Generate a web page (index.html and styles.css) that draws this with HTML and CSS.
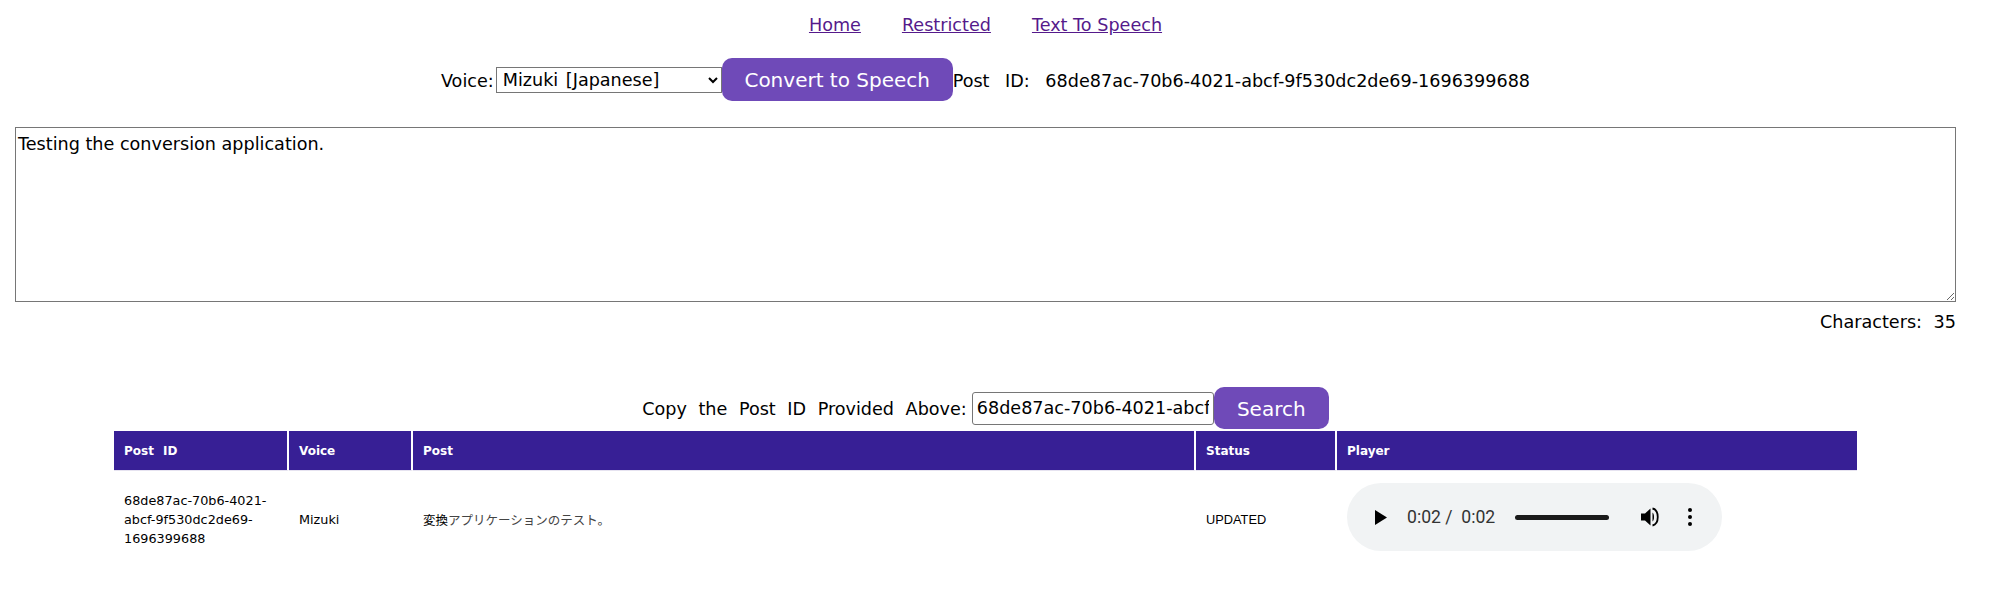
FILE: index.html
```html
<!DOCTYPE html>
<html lang="en">

<head>
    <meta charset="UTF-8">
    <title>Text To Speech</title>
    <link rel="stylesheet" href="styles.css">
</head>

<body>
    <div class="page">
        <nav class="nav">
            <a href="#">Home</a>
            <a href="#">Restricted</a>
            <a href="#">Text To Speech</a>
        </nav>

        <div class="form-row convert-row">
            <label for="voice">Voice:</label>
            <select id="voice" class="voice-select">
                <option>Mizuki [Japanese]</option>
            </select>
            <button class="btn btn-convert">Convert to Speech</button>
            <span class="post-id">Post ID: 68de87ac-70b6-4021-abcf-9f530dc2de69-1696399688</span>
        </div>

        <textarea class="post-text">Testing the conversion application.</textarea>
        <div class="counter">Characters: 35</div>

        <div class="form-row search-row">
            <label for="postId">Copy the Post ID Provided Above:</label>
            <input id="postId" class="search-input" type="text" value="68de87ac-70b6-4021-abcf-9f530dc2de69-1696399688">
            <button class="btn btn-search">Search</button>
        </div>

        <table class="posts">
            <colgroup>
                <col class="col-id">
                <col class="col-voice">
                <col class="col-post">
                <col class="col-status">
                <col class="col-player">
            </colgroup>
            <thead>
                <tr>
                    <th>Post ID</th>
                    <th>Voice</th>
                    <th>Post</th>
                    <th>Status</th>
                    <th>Player</th>
                </tr>
            </thead>
            <tbody>
                <tr>
                    <td>68de87ac-70b6-4021-abcf-9f530dc2de69-1696399688</td>
                    <td>Mizuki</td>
                    <td class="ja"><span class="kanji">変換</span>アプリケーションのテスト。</td>
                    <td class="status">UPDATED</td>
                    <td>
                        <div class="player">
                            <svg class="icon-play" width="12" height="15" viewBox="0 0 12 15">
                                <path d="M0 0 L12 7.5 L0 15 Z" fill="#000" />
                            </svg>
                            <span class="time">0:02 /&nbsp; 0:02</span>
                            <span class="track"></span>
                            <svg class="icon-volume" width="20" height="20" viewBox="0 0 20 20">
                                <path d="M0 6.5 H4 L9.5 1.5 V18.5 L4 13.5 H0 Z" fill="#000" />
                                <path d="M11.5 5.5 C13.5 7 13.5 13 11.5 14.5 Z" fill="#000" />
                                <path d="M11.5 1.5 C18.5 3 18.5 17 11.5 18.5" fill="none" stroke="#000" stroke-width="1.8" />
                            </svg>
                            <svg class="icon-more" width="4" height="18" viewBox="0 0 4 18">
                                <circle cx="2" cy="2" r="2" fill="#000" />
                                <circle cx="2" cy="9" r="2" fill="#000" />
                                <circle cx="2" cy="16" r="2" fill="#000" />
                            </svg>
                        </div>
                    </td>
                </tr>
            </tbody>
        </table>
    </div>
</body>

</html>
```

FILE: styles.css
```css
* {
    box-sizing: border-box;
}

body {
    margin: 0;
    background-color: #fff;
    color: #000;
    font-family: "DejaVu Sans", sans-serif;
    font-size: 17.6px;
}

.page {
    padding: 13px 35px 0 15px;
}

.nav {
    display: flex;
    justify-content: center;
    gap: 41px;
    height: 24px;
    line-height: 24px;
}

.nav a {
    color: #551a8b;
}

.form-row {
    display: flex;
    justify-content: center;
    align-items: center;
    word-spacing: 6px;
}

.form-row label,
.post-id {
    padding-top: 2px;
}

.post-id {
    word-spacing: 10px;
}

.convert-row {
    margin-top: 21px;
    height: 43px;
}

.voice-select {
    width: 226px;
    height: 26px;
    margin-left: 2px;
    padding-left: 2px;
    font-family: "DejaVu Sans", sans-serif;
    font-size: 17.6px;
    word-spacing: 2px;
    background-color: #fff;
}

.btn {
    padding-top: 2px;
    border: 0;
    border-radius: 10px;
    background-color: #6f4ab8;
    color: #fff;
    font-family: "DejaVu Sans", sans-serif;
    font-size: 20px;
}

.btn-convert {
    width: 231px;
    height: 43px;
}

.post-text {
    display: block;
    width: 100%;
    height: 175px;
    margin-top: 26px;
    padding: 6px 2px 2px;
    border: 1px solid #767676;
    font-family: "DejaVu Sans", sans-serif;
    font-size: 17.6px;
}

.counter {
    margin-top: 10px;
    line-height: 20px;
    text-align: right;
    word-spacing: 6px;
}

.search-row {
    margin-top: 55px;
    height: 42px;
}

.search-input {
    width: 242px;
    height: 33px;
    margin-left: 5px;
    padding: 1px 4px;
    border: 1px solid #767676;
    border-radius: 3px;
    font-family: "DejaVu Sans", sans-serif;
    font-size: 17.6px;
}

.btn-search {
    width: 115px;
    height: 42px;
}

.posts {
    width: 1743px;
    margin: 2px auto 0;
    border-spacing: 0;
    table-layout: fixed;
    font-size: 12.8px;
}

.col-id { width: 175px; }
.col-voice { width: 124px; }
.col-post { width: 783px; }
.col-status { width: 141px; }

.posts th {
    height: 40px;
    padding: 0 10px;
    background-color: #371f95;
    border-right: 2px solid #fff;
    border-bottom: 1px solid #e6e3f0;
    color: #fff;
    font-size: 12px;
    text-align: left;
    word-spacing: 5px;
}

.posts th:last-child {
    border-right: 0;
}

.posts td {
    padding: 12px 10px;
    line-height: 19px;
}

.ja {
    font-family: "Noto Sans CJK JP", sans-serif;
    font-size: 12.5px;
    color: #444;
}

.kanji {
    color: #000;
}

.status {
    font-family: "Liberation Sans", sans-serif;
}

.player {
    display: flex;
    align-items: center;
    width: 375px;
    height: 68px;
    margin-bottom: 4px;
    padding: 0 26px 0 28px;
    border-radius: 34px;
    background-color: #f1f3f4;
    font-family: Roboto, sans-serif;
    font-size: 17.6px;
}

.time {
    margin-left: 20px;
    color: #333;
}

.track {
    width: 94px;
    height: 5px;
    margin-left: 20px;
    border-radius: 3px;
    background-color: #1a1a1a;
}

.icon-volume {
    margin-left: 32px;
}

.icon-more {
    margin-left: 27px;
}
```
